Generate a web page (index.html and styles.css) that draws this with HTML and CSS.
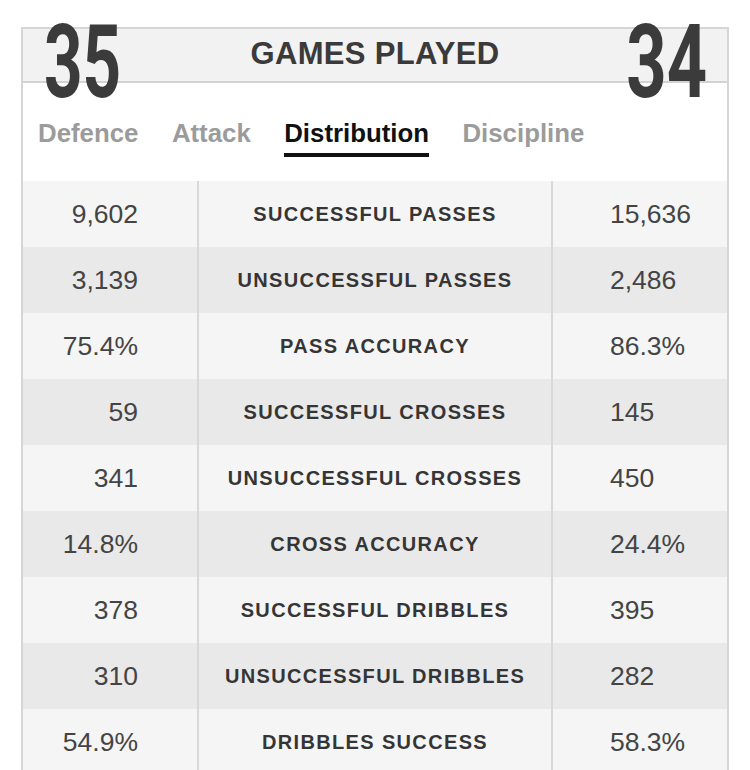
FILE: index.html
```html
<!DOCTYPE html>
<html>
<head>
<meta charset="utf-8">
<link rel="stylesheet" href="styles.css">
</head>
<body>
<div class="card">
  <div class="header">
    <span class="big big-left">35</span>
    <span class="title">GAMES PLAYED</span>
    <span class="big big-right">34</span>
  </div>
  <div class="tabs">
    <span class="tab">Defence</span>
    <span class="tab">Attack</span>
    <span class="tab active">Distribution</span>
    <span class="tab">Discipline</span>
  </div>
  <div class="table">
    <div class="row"><div class="val left">9,602</div><div class="label">SUCCESSFUL PASSES</div><div class="val right">15,636</div></div>
    <div class="row"><div class="val left">3,139</div><div class="label">UNSUCCESSFUL PASSES</div><div class="val right">2,486</div></div>
    <div class="row"><div class="val left">75.4%</div><div class="label">PASS ACCURACY</div><div class="val right">86.3%</div></div>
    <div class="row"><div class="val left">59</div><div class="label">SUCCESSFUL CROSSES</div><div class="val right">145</div></div>
    <div class="row"><div class="val left">341</div><div class="label">UNSUCCESSFUL CROSSES</div><div class="val right">450</div></div>
    <div class="row"><div class="val left">14.8%</div><div class="label">CROSS ACCURACY</div><div class="val right">24.4%</div></div>
    <div class="row"><div class="val left">378</div><div class="label">SUCCESSFUL DRIBBLES</div><div class="val right">395</div></div>
    <div class="row"><div class="val left">310</div><div class="label">UNSUCCESSFUL DRIBBLES</div><div class="val right">282</div></div>
    <div class="row"><div class="val left">54.9%</div><div class="label">DRIBBLES SUCCESS</div><div class="val right">58.3%</div></div>
  </div>
</div>
</body>
</html>
```
FILE: styles.css
```css
html, body {
  margin: 0;
  padding: 0;
  background: #ffffff;
  font-family: "Liberation Sans", Arial, sans-serif;
}
body {
  height: 770px;
  overflow: hidden;
}
.card {
  margin: 27px 0 0 21px;
  width: 704px;
  border: 2px solid #d6d6d6;
  border-bottom: none;
}
.header {
  height: 52px;
  background: #f2f2f2;
  border-bottom: 2px solid #d3d3d3;
  display: grid;
  grid-template-columns: 1fr auto 1fr;
  align-items: center;
}
.big {
  font-family: Roboto, "Liberation Sans", sans-serif;
  font-weight: 700;
  font-size: 102px;
  line-height: 52px;
  height: 52px;
  color: #3b3b3b;
  margin-top: 7px;
  margin-bottom: -7px;
  display: inline-block;
}
.big-left {
  justify-self: start;
  margin-left: 21px;
  transform: scaleX(0.66);
  transform-origin: left center;
}
.big-right {
  justify-self: end;
  margin-right: 20px;
  transform: scaleX(0.69);
  transform-origin: right center;
}
.title {
  font-weight: bold;
  font-size: 31px;
  letter-spacing: 0.3px;
  color: #3a3a3a;
  line-height: 36px;
  margin-top: -2px;
}
.tabs {
  display: flex;
  gap: 33.5px;
  padding: 35px 0 0 15px;
  margin-bottom: 24px;
}
.tab {
  font-weight: bold;
  font-size: 25.8px;
  line-height: 30px;
  color: #9b9b9b;
  padding-bottom: 5px;
  border-bottom: 4px solid transparent;
}
.tab.active {
  color: #111111;
  border-bottom-color: #111111;
}
.table {
  display: flex;
  flex-direction: column;
}
.row {
  display: grid;
  grid-template-columns: 174px 356px 174px;
  height: 66px;
  background: #f5f5f5;
}
.row:nth-child(even) {
  background: #e9e9e9;
}
.val, .label {
  display: flex;
  align-items: center;
}
.val {
  font-size: 26.5px;
  color: #444444;
}
.val.left {
  justify-content: flex-end;
  padding-right: 59px;
}
.val.right {
  padding-left: 57px;
}
.label {
  justify-content: center;
  font-weight: bold;
  font-size: 20px;
  letter-spacing: 1.35px;
  color: #353535;
  border-left: 2px solid #d8d8d8;
  border-right: 2px solid #d8d8d8;
}
```
